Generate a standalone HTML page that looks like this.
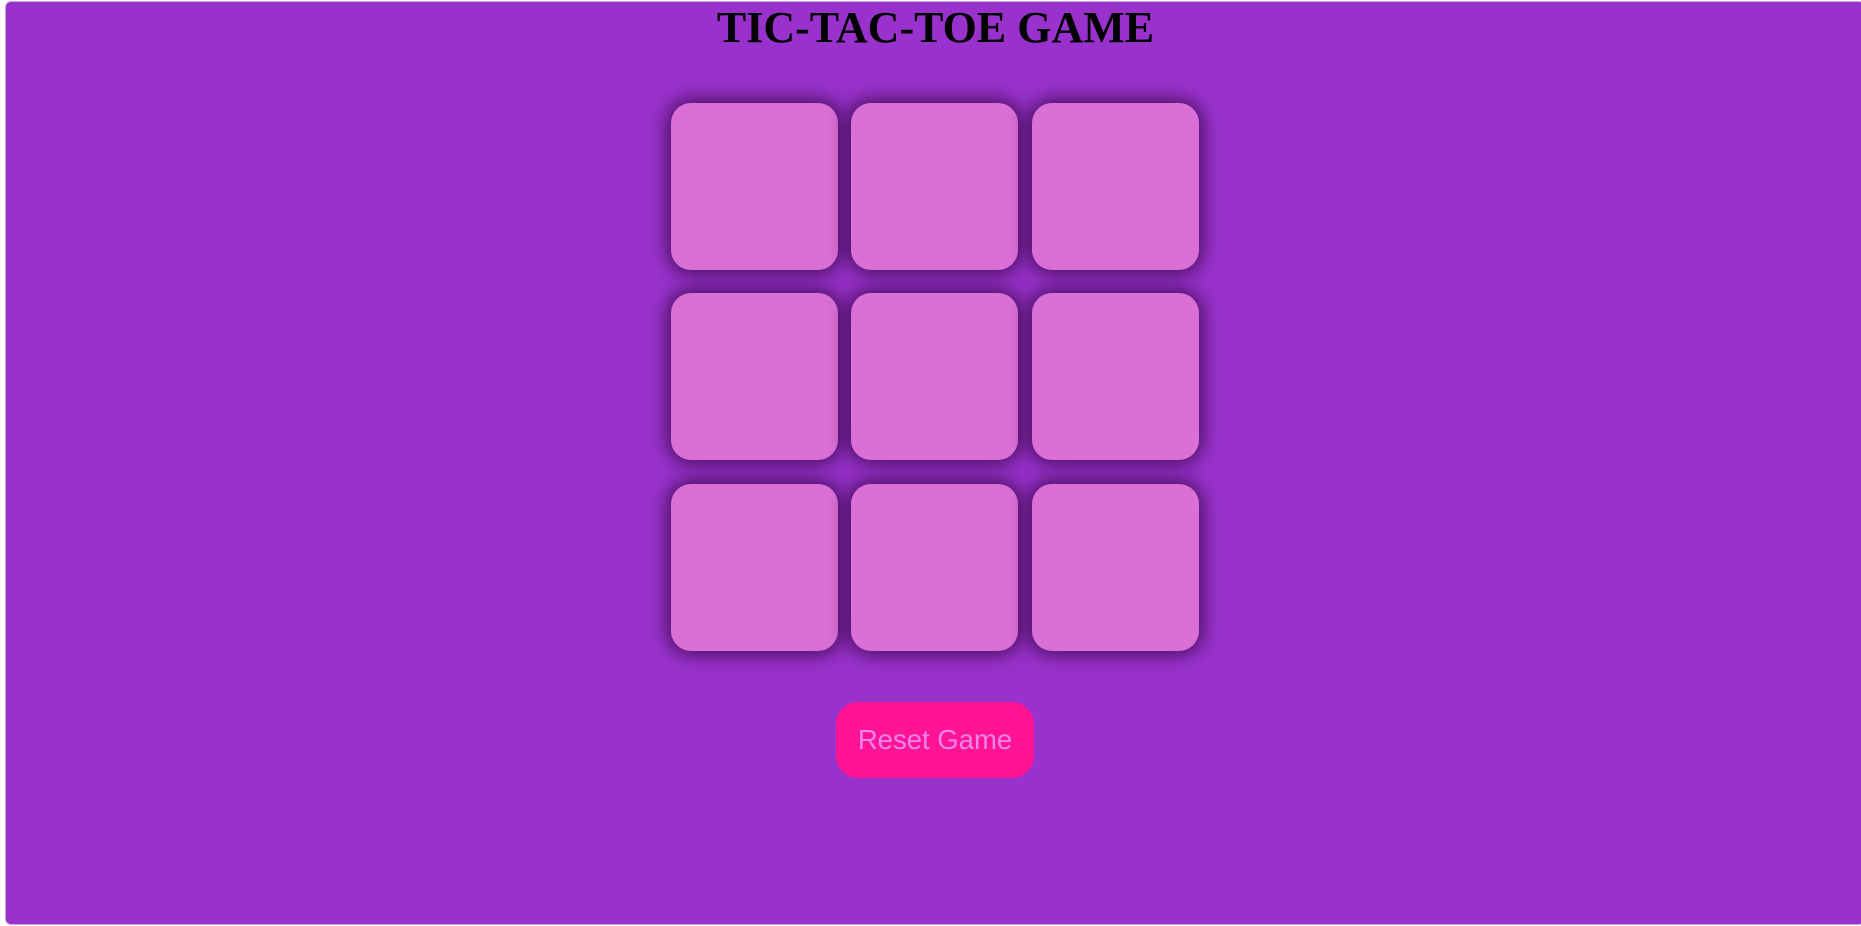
<!DOCTYPE html>
<html><head><style>
html,body{margin:0;padding:0;width:1861px;height:926px;background:#fff;overflow:hidden}
.wrap{position:absolute;left:5px;top:1px;width:1860px;height:924px;background:#9932cc;border-radius:6px;border:1px solid #c9a6dc;box-sizing:border-box}
h1{position:absolute;left:5px;width:1861px;top:3px;margin:0;text-align:center;font-family:"Liberation Serif",serif;font-weight:bold;font-size:44px;line-height:50px;color:#000}
.b{position:absolute;width:167px;height:167px;background:#da70d6;border-radius:20px;box-shadow:0 0 18px 4px rgba(40,0,50,0.7)}
.btn{position:absolute;left:836px;top:702px;width:198px;height:76px;background:#ff1493;border-radius:22px;color:#ee82ee;font-family:"Liberation Sans",sans-serif;font-size:27.5px;line-height:76px;text-align:center}
</style></head><body>
<div class="wrap"></div>
<h1>TIC-TAC-TOE GAME</h1>
<div class="b" style="left:671px;top:103px"></div>
<div class="b" style="left:851px;top:103px"></div>
<div class="b" style="left:1032px;top:103px"></div>
<div class="b" style="left:671px;top:293px"></div>
<div class="b" style="left:851px;top:293px"></div>
<div class="b" style="left:1032px;top:293px"></div>
<div class="b" style="left:671px;top:484px"></div>
<div class="b" style="left:851px;top:484px"></div>
<div class="b" style="left:1032px;top:484px"></div>
<div class="btn">Reset Game</div>
</body></html>
